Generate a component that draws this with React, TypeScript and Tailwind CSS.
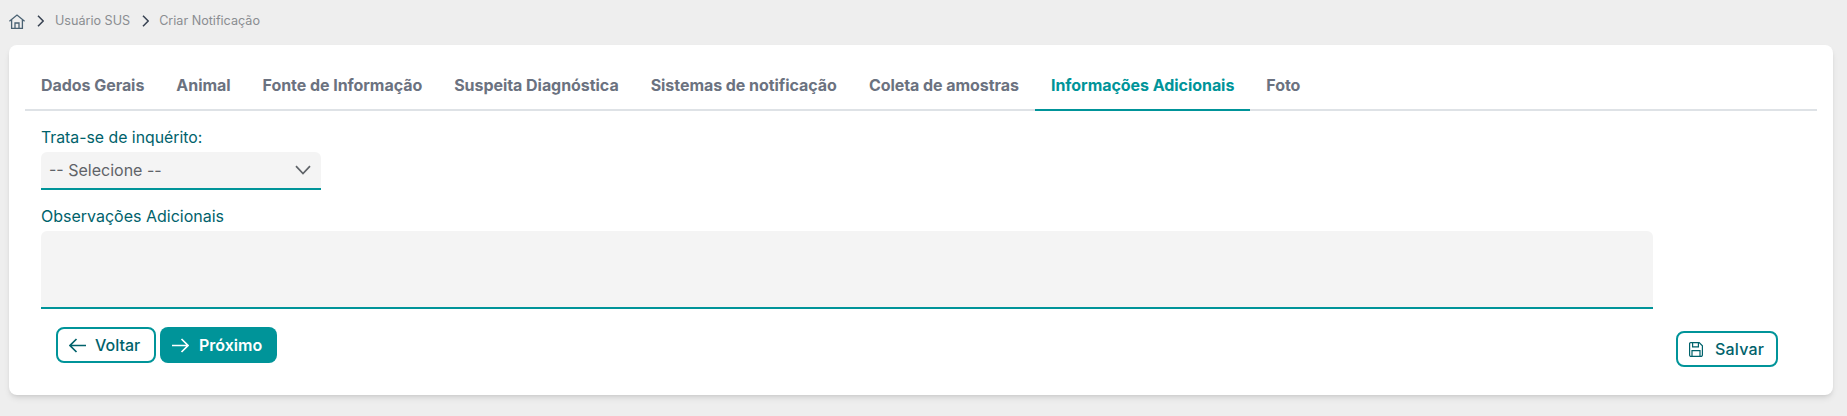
import React from "react";

const tabs = ["Dados Gerais", "Animal", "Fonte de Informação", "Suspeita Diagnóstica", "Sistemas de notificação", "Coleta de amostras", "Informações Adicionais", "Foto"];

const Chevron = ({ className }: { className: string }) => (
  <svg width="7" height="12" viewBox="0 0 7 12" fill="none" stroke="#374151" strokeWidth="1.5" className={`shrink-0 ${className}`}>
    <path d="M1 .7 6.200 6 1 11.300" />
  </svg>
);

const Arrow = ({ right = false }: { right?: boolean }) => (
  <svg width="17" height="15" viewBox="0 0 17 15" fill="none" stroke="currentColor" strokeWidth="1.7" className="shrink-0">
    <path d={right ? "M0 7.5h16M9.5 1l6.5 6.5L9.5 14" : "M17 7.5H1M7.5 1 1 7.5 7.5 14"} />
  </svg>
);

export default function App() {
  return (
    <div className="h-[416px] w-full overflow-hidden bg-[#eeeeee] px-[9px] font-['Inter',sans-serif]">
      <nav className="flex h-[45px] items-center pb-[3px] text-[12.6px] text-[#8a8d91]">
        <svg width="16" height="15" viewBox="0 0 16 15" fill="none" stroke="#4a6273" strokeWidth="1.3" className="shrink-0">
          <path d="M.4 7.200 8 1l7.600 6.200M2.600 5.600v8.800h10.800V5.600M6 14.400V9h4v5.400" />
        </svg>
        <Chevron className="ml-[12px]" />
        <span className="ml-[11px]">Usuário SUS</span>
        <Chevron className="ml-[12px]" />
        <span className="ml-[10px]">Criar Notificação</span>
      </nav>
      <main className="h-[350px] w-[1824px] rounded-lg bg-white px-4 pt-4 shadow-md">
        <div className="flex h-[50px] border-b-2 border-[#dee2e6]">
          {tabs.map((t, i) => (
            <div
              key={t}
              className={`-mb-[2px] flex h-[50px] items-center border-b-2 px-4 text-base font-bold tracking-[-0.05px] ${
                i === 6 ? "border-[#009499] text-[#009499]" : "border-transparent text-[#6b7280]"
              }`}
            >
              {t}
            </div>
          ))}
        </div>
        <div className="pl-4 text-[#00626b]">
          <label className="mt-[17px] block text-[15.8px] leading-[20px]">Trata-se de inquérito:</label>
          <div className="mt-[4px] flex h-[38px] w-[280px] items-center justify-between rounded-t-md border-b-2 border-[#009499] bg-[#f4f4f4] pl-[8px] pr-[10px] text-base text-[#5f6368]">
            <span>-- Selecione --</span>
            <svg width="16" height="10" viewBox="0 0 16 10" fill="none" stroke="#5f6368" strokeWidth="1.7" className="shrink-0">
              <path d="M1 1.200 8 8.500l7-7.300" />
            </svg>
          </div>
          <label className="mt-[16px] block text-base leading-[20px]">Observações Adicionais</label>
          <div className="mt-[5px] h-[78px] w-[1612px] rounded-t-md border-b-2 border-[#009499] bg-[#f4f4f4]" />
          <div className="flex w-[1737px] items-start justify-between pl-[15px]">
            <div className="mt-[18px] flex gap-[4px]">
              <button className="flex h-[36px] w-[100px] items-center gap-[9px] rounded-lg border-2 border-[#009499] bg-white pl-[11px] text-base font-medium text-[#00626b]">
                <Arrow />
                Voltar
              </button>
              <button className="flex h-[36px] w-[117px] items-center gap-[10px] rounded-lg bg-[#009499] pl-[12px] text-base font-semibold text-white">
                <Arrow right />
                Próximo
              </button>
            </div>
            <button className="mt-[22px] flex h-[36px] w-[102px] items-center gap-[12px] rounded-lg border-2 border-[#009499] bg-white pl-[11px] text-base font-medium tracking-[0.2px] text-[#00626b]">
              <svg width="14" height="15" viewBox="0 0 14 15" fill="none" stroke="currentColor" strokeWidth="1.2" className="shrink-0">
                <path d="M1.600.6h8.600l3.200 3.200v9.100a1.500 1.500 0 0 1-1.500 1.500H2.100A1.500 1.500 0 0 1 .6 12.900V1.600A1 1 0 0 1 1.600.6ZM3.600.6v4.200h5.800V.6M3 14.400V8.600h8v5.800" />
              </svg>
              Salvar
            </button>
          </div>
        </div>
      </main>
    </div>
  );
}
